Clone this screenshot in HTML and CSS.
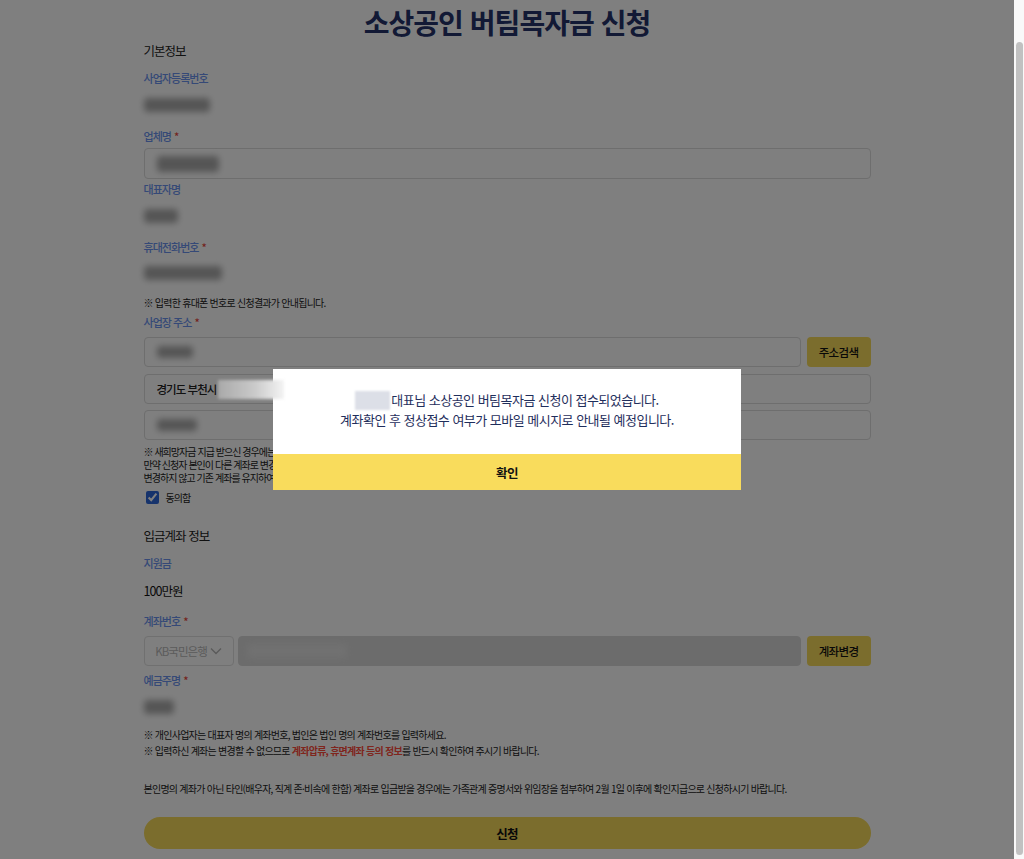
FILE: index.html
```html
<!DOCTYPE html>
<html lang="ko">
<head>
<meta charset="utf-8">
<title>소상공인 버팀목자금 신청</title>
<link rel="stylesheet" href="styles.css">
</head>
<body>
<div class="viewport">
<main class="page">
  <h1 class="title">소상공인 버팀목자금 신청</h1>

  <h2 class="section-title">기본정보</h2>
  <div class="label">사업자등록번호</div>
  <div class="value"><span class="redact r-biz"></span></div>

  <div class="label gap12">업체명<span class="req">*</span></div>
  <div class="input first-input"><span class="redact r-company"></span></div>

  <div class="label gap1">대표자명</div>
  <div class="value"><span class="redact r-name"></span></div>

  <div class="label gap12">휴대전화번호<span class="req">*</span></div>
  <div class="value gap7"><span class="redact r-phone"></span></div>

  <p class="note gap12">※ 입력한 휴대폰 번호로 신청결과가 안내됩니다.</p>

  <div class="label gap2">사업장 주소<span class="req">*</span></div>
  <div class="row gap6">
    <div class="input grow"><span class="redact r-zip"></span></div>
    <button class="btn-yellow">주소검색</button>
  </div>
  <div class="input gap7"><span class="addr">경기도 부천시</span><span class="redact-top"></span></div>
  <div class="input gap6"><span class="redact r-detail"></span></div>

  <p class="notice">※ 새희망자금 지급 받으신 경우에는 기존 계좌로 지급됩니다.<br>만약 신청자 본인이 다른 계좌로 변경을 원하시는 경우<br>변경하지 않고 기존 계좌를 유지하여 주십시오.</p>

  <label class="agree"><input type="checkbox" checked><span>동의함</span></label>

  <h2 class="section-title gap21">입금계좌 정보</h2>
  <div class="label">지원금</div>
  <div class="amount">100만원</div>

  <div class="label gap11">계좌번호<span class="req">*</span></div>
  <div class="row gap6">
    <div class="select">KB국민은행<svg class="chev" viewBox="0 0 12 8" width="12" height="8"><path d="M1 1.5l5 5 5-5" fill="none" stroke="#b5b5b5" stroke-width="1.4"/></svg></div>
    <div class="input disabled grow"><span class="redact r-account"></span></div>
    <button class="btn-yellow">계좌변경</button>
  </div>

  <div class="label gap5">예금주명<span class="req">*</span></div>
  <div class="value"><span class="redact r-holder"></span></div>

  <p class="note gap10">※ 개인사업자는 대표자 명의 계좌번호, 법인은 법인 명의 계좌번호를 입력하세요.</p>
  <p class="note">※ 입력하신 계좌는 변경할 수 없으므로 <span class="warn">계좌압류, 휴면계좌 등의 정보</span>를 반드시 확인하여 주시기 바랍니다.</p>
  <p class="note gap22">본인명의 계좌가 아닌 타인(배우자, 직계 존·비속에 한함) 계좌로 입금받을 경우에는 가족관계 증명서와 위임장을 첨부하여 2월 1일 이후에 확인지급으로 신청하시기 바랍니다.</p>

  <button class="submit">신청</button>
</main>
</div>
<div class="scrollbar"><div class="thumb"></div></div>

<div class="overlay">
  <div class="modal">
    <div class="modal-body">
      <p class="modal-line"><span class="redact-name"></span>대표님 소상공인 버팀목자금 신청이 접수되었습니다.</p>
      <p class="modal-line">계좌확인 후 정상접수 여부가 모바일 메시지로 안내될 예정입니다.</p>
    </div>
    <button class="modal-btn">확인</button>
  </div>
</div>
</body>
</html>
```

FILE: styles.css
```css
body {
  margin: 0;
  height: 100vh;
  overflow: hidden;
  display: flex;
  background: #fff;
  font-family: "Noto Sans CJK KR", "Noto Sans", sans-serif;
  color: #222;
  letter-spacing: -0.06em;
}
.viewport {
  flex: 1;
  min-width: 0;
}
.scrollbar {
  width: 10px;
  background: #f9f9f9;
  display: flex;
  flex-direction: column;
  padding: 42px 1px 4px 2px;
  box-sizing: border-box;
}
.thumb {
  flex: 1;
  background: #c1c1c1;
  border-radius: 4px;
}
.page {
  width: 727px;
  margin: 0 auto;
  padding: 5px 0 10px;
  display: flex;
  flex-direction: column;
}
.title {
  margin: 0;
  font-size: 28px;
  line-height: 34px;
  font-weight: 700;
  color: #24336a;
  text-align: center;
}
.section-title {
  margin: 2px 0 0;
  font-size: 12.5px;
  line-height: 20px;
  font-weight: 400;
  color: #222;
}
.label {
  margin-top: 8px;
  font-size: 11px;
  line-height: 18px;
  color: #6a92ee;
  font-weight: 500;
}
.req {
  color: #e8473b;
  margin-left: 3px;
}
.value {
  margin-top: 8px;
  height: 20px;
  display: flex;
  align-items: center;
}

.redact {
  display: inline-block;
  height: 14px;
  background: #ababab;
  border-radius: 4px;
  filter: blur(3px);
}
.r-biz { width: 66px; }
.r-company { width: 62px; height: 16px; }
.r-name { width: 34px; }
.r-phone { width: 78px; }
.r-zip { width: 36px; height: 12px; }
.r-detail { width: 40px; height: 12px; }
.r-account { width: 100px; height: 14px; background: #e2e2e2; }
.r-holder { width: 30px; }

.input {
  box-sizing: border-box;
  height: 30px;
  border: 1px solid #dcdcdc;
  border-radius: 4px;
  background: #fff;
  display: flex;
  align-items: center;
  padding: 0 12px;
  font-size: 11.5px;
  color: #222;
}
.first-input {
  margin-top: 3px;
  height: 31px;
}
.grow {
  flex: 1;
}
.row {
  display: flex;
  gap: 6px;
}
.addr {
  font-weight: 500;
}
.redact-top {
  position: relative;
  z-index: 20;
  width: 66px;
  height: 19px;
  margin-left: 2px;
  background: linear-gradient(90deg, #a9a9a9 0%, #c9c9c9 55%, #f4f4f4 100%);
  filter: blur(1.5px);
}
.btn-yellow {
  width: 64px;
  height: 30px;
  border: 0;
  border-radius: 4px;
  background: #f7da5a;
  font-family: inherit;
  font-size: 11.5px;
  letter-spacing: -0.06em;
  color: #111;
  padding: 0;
  font-weight: 500;
}
.note {
  margin: 0;
  font-size: 10px;
  line-height: 16px;
  color: #222;
  letter-spacing: -0.075em;
}
.warn {
  color: #ff4a3a;
  font-weight: 700;
}
.notice {
  margin: 5px 0 0;
  font-size: 10px;
  line-height: 13px;
  color: #222;
}
.agree {
  margin-top: 5px;
  height: 16px;
  display: flex;
  align-items: center;
  gap: 7px;
  font-size: 10px;
  color: #222;
}
.agree input {
  margin: 0 0 0 2px;
  width: 13px;
  height: 13px;
  accent-color: #2c66d8;
}
.amount {
  margin-top: 9px;
  font-size: 12.5px;
  line-height: 20px;
  color: #111;
}
.select {
  box-sizing: border-box;
  width: 90px;
  height: 30px;
  border: 1px solid #e0e0e0;
  border-radius: 4px;
  display: flex;
  align-items: center;
  justify-content: center;
  gap: 3px;
  font-size: 11.5px;
  color: #b8b8b8;
  margin-right: -2px;
}
.chev {
  display: block;
}
.disabled {
  background: #d9d9d9;
  border-color: #d9d9d9;
  padding-left: 8px;
}
.submit {
  margin-top: 20px;
  height: 32px;
  border: 0;
  border-radius: 16px;
  background: #f7da5a;
  font-family: inherit;
  font-size: 12.5px;
  font-weight: 700;
  letter-spacing: -0.06em;
  color: #111;
}

.gap1 { margin-top: 1px; }
.gap2 { margin-top: 2px; }
.gap5 { margin-top: 5px; }
.gap6 { margin-top: 6px; }
.gap7 { margin-top: 7px; }
.gap10 { margin-top: 10px; }
.gap11 { margin-top: 11px; }
.gap12 { margin-top: 12px; }
.gap21 { margin-top: 21px; }
.gap22 { margin-top: 22px; }

.overlay {
  position: fixed;
  top: 0;
  left: 0;
  bottom: 0;
  right: 10px;
  z-index: 10;
  background: rgba(0, 0, 0, 0.5);
  display: flex;
  align-items: center;
  justify-content: center;
}
.modal {
  width: 468px;
  background: #fff;
  display: flex;
  flex-direction: column;
}
.modal-body {
  padding: 21px 0 24px;
}
.modal-line {
  margin: 0;
  text-align: center;
  font-size: 13px;
  line-height: 20px;
  color: #1f2e5c;
  letter-spacing: -0.04em;
  display: flex;
  justify-content: center;
  align-items: center;
}
.redact-name {
  width: 35px;
  height: 19px;
  background: #dcdfe7;
  filter: blur(1px);
  margin-right: 1px;
}
.modal-btn {
  height: 36px;
  border: 0;
  background: #f9dc5c;
  font-family: inherit;
  font-size: 12.5px;
  font-weight: 700;
  letter-spacing: -0.04em;
  color: #111;
}
```
